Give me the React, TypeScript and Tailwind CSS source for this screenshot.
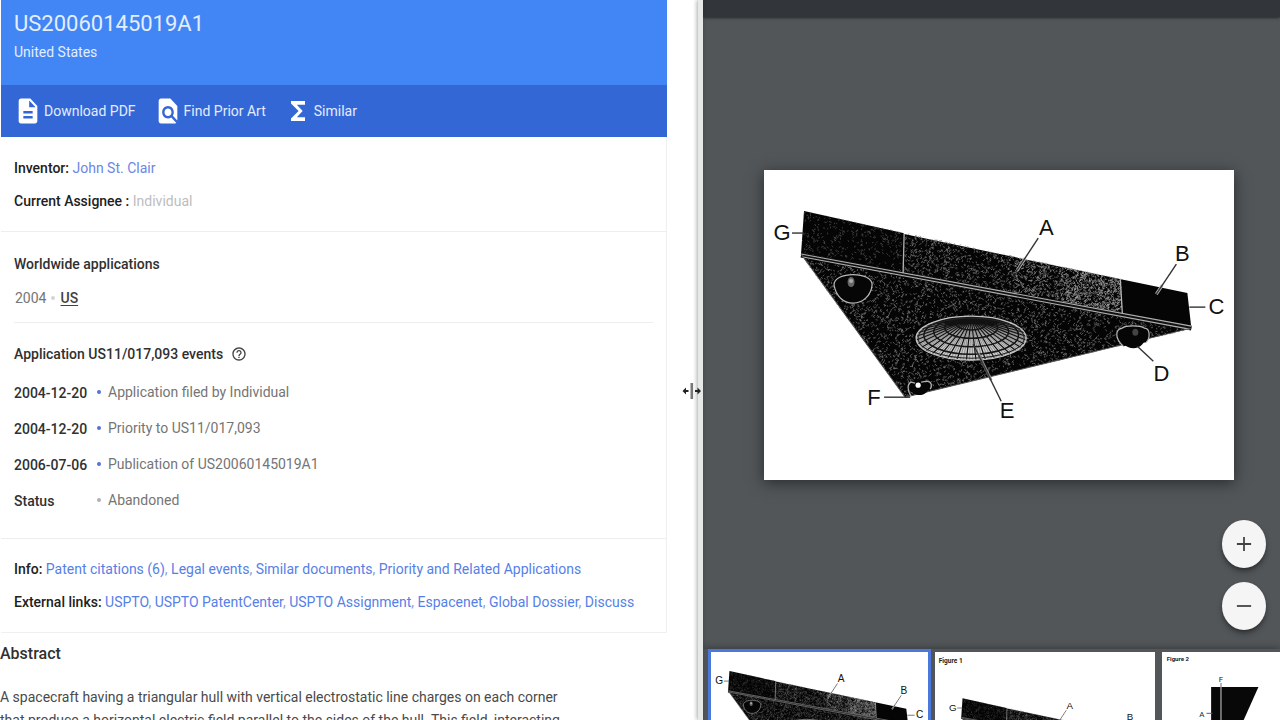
import type { ReactNode } from 'react';
import { MdDescription, MdFindInPage, MdFunctions, MdHelpOutline } from 'react-icons/md';

const actions = [
  { label: 'Download PDF', Icon: MdDescription },
  { label: 'Find Prior Art', Icon: MdFindInPage },
  { label: 'Similar', Icon: MdFunctions },
];

const events = [
  { date: '2004-12-20', title: 'Application filed by Individual', active: true },
  { date: '2004-12-20', title: 'Priority to US11/017,093', active: true },
  { date: '2006-07-06', title: 'Publication of US20060145019A1', active: true },
  { date: 'Status', title: 'Abandoned', active: false },
];

const infoLinks = ['Patent citations (6)', 'Legal events', 'Similar documents', 'Priority and Related Applications'];

const externalLinks = ['USPTO', 'USPTO PatentCenter', 'USPTO Assignment', 'Espacenet', 'Global Dossier', 'Discuss'];

const figureLabels = [
  { text: 'G', x: 18, y: 62, line: 'M28 63H40' },
  { text: 'A', x: 282, y: 57, line: 'M274 68 253 100' },
  { text: 'B', x: 418, y: 83, line: 'M412 94 392 124' },
  { text: 'C', x: 452, y: 136, line: 'M425 137H441' },
  { text: 'D', x: 397, y: 203, line: 'M373 176 389 191' },
  { text: 'E', x: 243, y: 240, line: 'M209 174 237 231' },
  { text: 'F', x: 110, y: 227, line: 'M120 227H146' },
];

// small seeded generator, so the stipple is the same on every render
function stipple(count: number, x: number, y: number, w: number, h: number, seed: number) {
  let s = seed;
  const next = () => {
    s = (s * 16807) % 2147483647;
    return s / 2147483647;
  };
  let d = '';
  for (let i = 0; i < count; i++) {
    const px = x + next() * w;
    const py = y + next() * h;
    d += `M${px.toFixed(1)} ${py.toFixed(1)}l${(next() * 3 - 1.5).toFixed(1)} ${(next() * 3 - 1.5).toFixed(1)}`;
  }
  return d;
}

const hullStipple = stipple(6600, 37, 84, 390, 145, 77);
const sideStipple = stipple(2700, 140, 60, 217, 86, 913);
const sideStippleDense = stipple(600, 250, 80, 107, 66, 4021);
const sideStippleEnd = stipple(500, 300, 90, 57, 56, 1288);
const bowStipple = stipple(550, 37, 40, 103, 66, 355);

// meridians of the dome, fanned out from its top
function meridians(count: number) {
  return Array.from({ length: count }, (_, i) => {
    const a = ((i + 0.5) / count) * Math.PI * 2;
    return `M207 148L${(207 + Math.cos(a) * 55).toFixed(1)} ${(168 + Math.sin(a) * 22).toFixed(1)}`;
  }).join('');
}

const mainMeridians = meridians(36);
const innerMeridians = meridians(108);
const rings = [0.28, 0.48, 0.68, 0.86];

function Dome() {
  return (
    <g fill="none">
      <ellipse cx="207" cy="168" rx="55" ry="22" fill="#c9c9c9" />
      <path d={innerMeridians} stroke="#555" strokeWidth="0.5" />
      <path d={mainMeridians} stroke="#111" strokeWidth="1.1" />
      {rings.map((r) => (
        <ellipse key={r} cx="207" cy={148 + 20 * r} rx={55 * r} ry={22 * r} stroke="#151515" strokeWidth="1.5" />
      ))}
      <ellipse cx="207" cy="168" rx="53" ry="20" stroke="#222" strokeWidth="1" />
      <ellipse cx="207" cy="168" rx="55" ry="22" stroke="#c4c4c4" strokeWidth="1.2" />
    </g>
  );
}

function Spacecraft({ id }: { id: string }) {
  return (
    <g>
      <defs>
        <clipPath id={`${id}-hull`}>
          <path d="M37 86 427 159 141 227Z" />
        </clipPath>
        <clipPath id={`${id}-side`}>
          <path d="M40 41 423 123 427 158 37 84Z" />
        </clipPath>
      </defs>
      <path d="M40 41 139 63 140 64 423 123 427 158 141 227 37 84Z" fill="#050505" />
      <g fill="none" strokeLinecap="round">
        <g clipPath={`url(#${id}-hull)`}>
          <path d={hullStipple} stroke="#7c7c7c" strokeWidth="0.7" />
        </g>
        <g clipPath={`url(#${id}-side)`}>
          <path d={sideStipple} stroke="#7c7c7c" strokeWidth="0.7" />
          <path d={sideStippleDense} stroke="#929292" strokeWidth="0.8" />
          <path d={sideStippleEnd} stroke="#a2a2a2" strokeWidth="0.8" />
          <path d={bowStipple} stroke="#555" strokeWidth="0.7" />
        </g>
      </g>
      <path d="M37 85 427 158" stroke="#111" strokeWidth="5" />
      <path d="M37 84 427 156M39 87 425 159" stroke="#b0b0b0" strokeWidth="1.1" />
      <path d="M140 64 139 103M356 109 358 143" stroke="#b5b5b5" strokeWidth="1.3" />
      <path d="M37 84 141 227 427 158" fill="none" stroke="#555" strokeWidth="1" />

      <Dome />

      <g fill="#060606" stroke="#b8b8b8" strokeWidth="1.2">
        <path d="M70 115C69 101 109 101 108 115 107 125 99 133 89 133 79 133 72 126 70 115Z" />
        <path d="M359 176C350 168 351 159 358 158 361 155 376 155 380 158 386 158 386 168 382 172" />
      </g>
      <path d="M357 165H381C381 173 376 178 369 178 362 178 357 173 357 165Z" fill="#060606" />
      <path d="M144 214C147 227 162 230 167 214L154 211Z" fill="#060606" />
      <path
        d="M147 226C143 220 143 214 147 212L151 213M157 212 163 211C168 212 168 216 166 219"
        fill="none"
        stroke="#b0b0b0"
        strokeWidth="1.3"
      />
      <ellipse cx="87" cy="112" rx="3.5" ry="5" fill="#666" />
      <circle cx="87" cy="111" r="2" fill="#aaa" />
      <circle cx="154" cy="215" r="2.6" fill="#fff" />
      <ellipse cx="371" cy="162" rx="3" ry="3.5" fill="#444" />
      <path d="M253 100 261 88M392 124 398 115" stroke="#bbb" strokeWidth="3" />
      <path d="M214 183 227 210" stroke="#888" strokeWidth="2.6" />

      {figureLabels.map((l) => (
        <g key={l.text}>
          <path d={l.line} stroke="#333" strokeWidth="1.4" />
          <text
            x={l.x}
            y={l.y + 8}
            textAnchor="middle"
            fontSize="22"
            fill="#111"
            className="font-['Liberation_Sans',Arial,sans-serif]"
          >
            {l.text}
          </text>
        </g>
      ))}
    </g>
  );
}

function LinkList({ label, links }: { label: string; links: string[] }) {
  return (
    <p>
      <span className="font-medium text-[#212121]">{label}</span>{' '}
      {links.map((link, i) => (
        <span key={link} className="text-[#8a9bd8]">
          {i > 0 && ', '}
          <a href="#" className="text-[#5680e8] hover:underline">
            {link}
          </a>
        </span>
      ))}
    </p>
  );
}

function ZoomButton({ label, path }: { label: string; path: string }) {
  return (
    <button
      type="button"
      aria-label={label}
      className="flex h-12 w-11 items-center justify-center rounded-[50%] bg-[#f5f5f6] shadow-md shadow-black/40 hover:bg-white"
    >
      <svg viewBox="0 0 18 18" className="size-4" stroke="#424242" strokeWidth="2">
        <path d={path} />
      </svg>
    </button>
  );
}

function Thumbnail({ label, selected, children }: { label: string; selected?: boolean; children: ReactNode }) {
  return (
    <button
      type="button"
      aria-label={label}
      className={
        selected
          ? '-mr-[3px] w-[223px] shrink-0 self-start border-3 border-[#4a78dc] bg-white'
          : 'mt-[3px] w-[220px] shrink-0 self-start bg-white'
      }
    >
      <svg viewBox="0 0 470 310" className="block w-full">
        {children}
      </svg>
    </button>
  );
}

export default function App() {
  return (
    <div className="flex h-screen overflow-hidden bg-white font-[Roboto,'Liberation_Sans',sans-serif] text-sm text-[#757575]">
      <main className="relative w-[54.5%] shrink-0 overflow-hidden bg-white pr-[31px]">
        <section className="ml-px border-r border-b border-[#f0f0f0]">
          <header className="-mr-px bg-[#4285f4] px-[13px] pt-2.5 pb-[23px] text-[#e3eeff]">
            <h1 className="text-[22px] leading-7">US20060145019A1</h1>
            <p className="mt-1 leading-5">United States</p>
          </header>
          <nav className="-mr-px flex h-[52px] items-center gap-[18px] bg-[#3367d6] px-[13px] text-[#e3ecff]">
            {actions.map(({ label, Icon }) => (
              <a key={label} href="#" className="flex items-center gap-0.5">
                <Icon className="h-[30px] w-7 text-white" preserveAspectRatio="none" />
                {label}
              </a>
            ))}
          </nav>

          <div className="flex flex-col gap-[13px] border-b border-[#eeeeee] px-[13px] pt-[21px] pb-5 leading-5">
            <p>
              <span className="font-medium text-[#212121]">Inventor:</span>{' '}
              <a href="#" className="text-[#6b86e6]">
                John St. Clair
              </a>
            </p>
            <p>
              <span className="font-medium text-[#212121]">Current Assignee :</span>{' '}
              <span className="text-[#bdbdbd]">Individual</span>
            </p>
          </div>

          <div className="px-[13px] pt-[22px]">
            <h2 className="leading-5 font-medium text-[#303030]">Worldwide applications</h2>
            <div className="mt-3.5 flex items-center border-b border-[#eeeeee] pb-3.5 leading-5">
              <span className="ml-px">2004</span>
              <span className="mx-[5px] size-1 rounded-full bg-[#d5d5d5]" />
              <a href="#" className="font-medium text-[#424242] underline underline-offset-2">
                US
              </a>
            </div>
          </div>

          <div className="border-b border-[#eeeeee] px-[13px] pt-[21px] pb-5">
            <h2 className="flex items-center gap-2 leading-5 font-medium text-[#303030]">
              Application US11/017,093 events
              <MdHelpOutline className="size-4 text-[#424242]" />
            </h2>
            <ul className="mt-2.5">
              {events.map((e) => (
                <li key={e.title} className="flex h-9 items-center">
                  <span className="w-[83px] pt-0.5 font-medium text-[#303030]">{e.date}</span>
                  <span className={`size-1 rounded-full ${e.active ? 'bg-[#5570d8]' : 'bg-[#b0b0b0]'}`} />
                  <span className="ml-[7px]">{e.title}</span>
                </li>
              ))}
            </ul>
          </div>

          <div className="flex flex-col gap-[13px] px-[13px] py-5 leading-5">
            <LinkList label="Info:" links={infoLinks} />
            <LinkList label="External links:" links={externalLinks} />
          </div>
        </section>

        <section className="pt-[9px] text-[#4a4a4a]">
          <h2 className="text-base leading-6 font-medium text-[#303030]">Abstract</h2>
          <p className="mt-5 max-w-[580px] leading-[23px]">
            A spacecraft having a triangular hull with vertical electrostatic line charges on each corner that produce a
            horizontal electric field parallel to the sides of the hull. This field, interacting
          </p>
        </section>
      </main>

      <div
        role="separator"
        aria-orientation="vertical"
        className="relative z-10 w-[5px] shrink-0 cursor-col-resize bg-[#e6e7e7] shadow-[-1px_0_4px_rgba(0,0,0,0.35)]"
      >
        <svg viewBox="0 0 20 18" className="absolute top-[382px] -left-4 h-[18px] w-5" fill="#222">
          <rect x="8.5" y="1" width="2.6" height="16" fill="#777" />
          <path d="M0.5 9 4 5.5V8H6.5V10H4V12.5ZM19 9 15.5 5.5V8H13V10H15.5V12.5Z" />
        </svg>
      </div>

      <aside className="relative flex min-w-0 flex-1 flex-col bg-[#525659]">
        <div className="h-[17px] shrink-0 bg-[#323539] shadow-sm shadow-black/40" />
        <div className="flex min-h-0 flex-1 items-start justify-center pt-[153px] pr-[46px] pl-[61px]">
          <figure className="w-full bg-white shadow-[0_3px_14px_rgba(0,0,0,0.5)]">
            <svg viewBox="0 0 470 310" className="block w-full" role="img" aria-label="Triangular spacecraft">
              <Spacecraft id="main" />
            </svg>
          </figure>
        </div>
        <div className="absolute right-3.5 bottom-[90px] flex flex-col gap-3.5">
          <ZoomButton label="Zoom in" path="M9 1V17M1 9H17" />
          <ZoomButton label="Zoom out" path="M1 9H17" />
        </div>
        <div className="flex h-[71px] shrink-0 gap-[7px] overflow-hidden pl-[5px] shadow-[0_-2px_6px_rgba(0,0,0,0.25)]">
          <Thumbnail label="Page 1" selected>
            <Spacecraft id="thumb-1" />
          </Thumbnail>
          <Thumbnail label="Page 2">
            <text x="8" y="24" fontSize="14" fontWeight="bold" fill="#222">
              Figure 1
            </text>
            <g transform="translate(21 60) scale(0.947)">
              <Spacecraft id="thumb-2" />
            </g>
          </Thumbnail>
          <Thumbnail label="Page 3">
            <text x="10" y="19" fontSize="13" fontWeight="bold" fill="#222">
              Figure 2
            </text>
            <path d="M105 75H206L150 200H105Z" fill="#080808" />
            <path d="M126 66V200" stroke="#999" strokeWidth="3" />
            <path d="M95 131H108" stroke="#555" strokeWidth="2" />
            <text x="126" y="64" textAnchor="middle" fontSize="17" fill="#222">
              F
            </text>
            <text x="85" y="138" textAnchor="middle" fontSize="17" fill="#222">
              A
            </text>
          </Thumbnail>
        </div>
      </aside>
    </div>
  );
}
